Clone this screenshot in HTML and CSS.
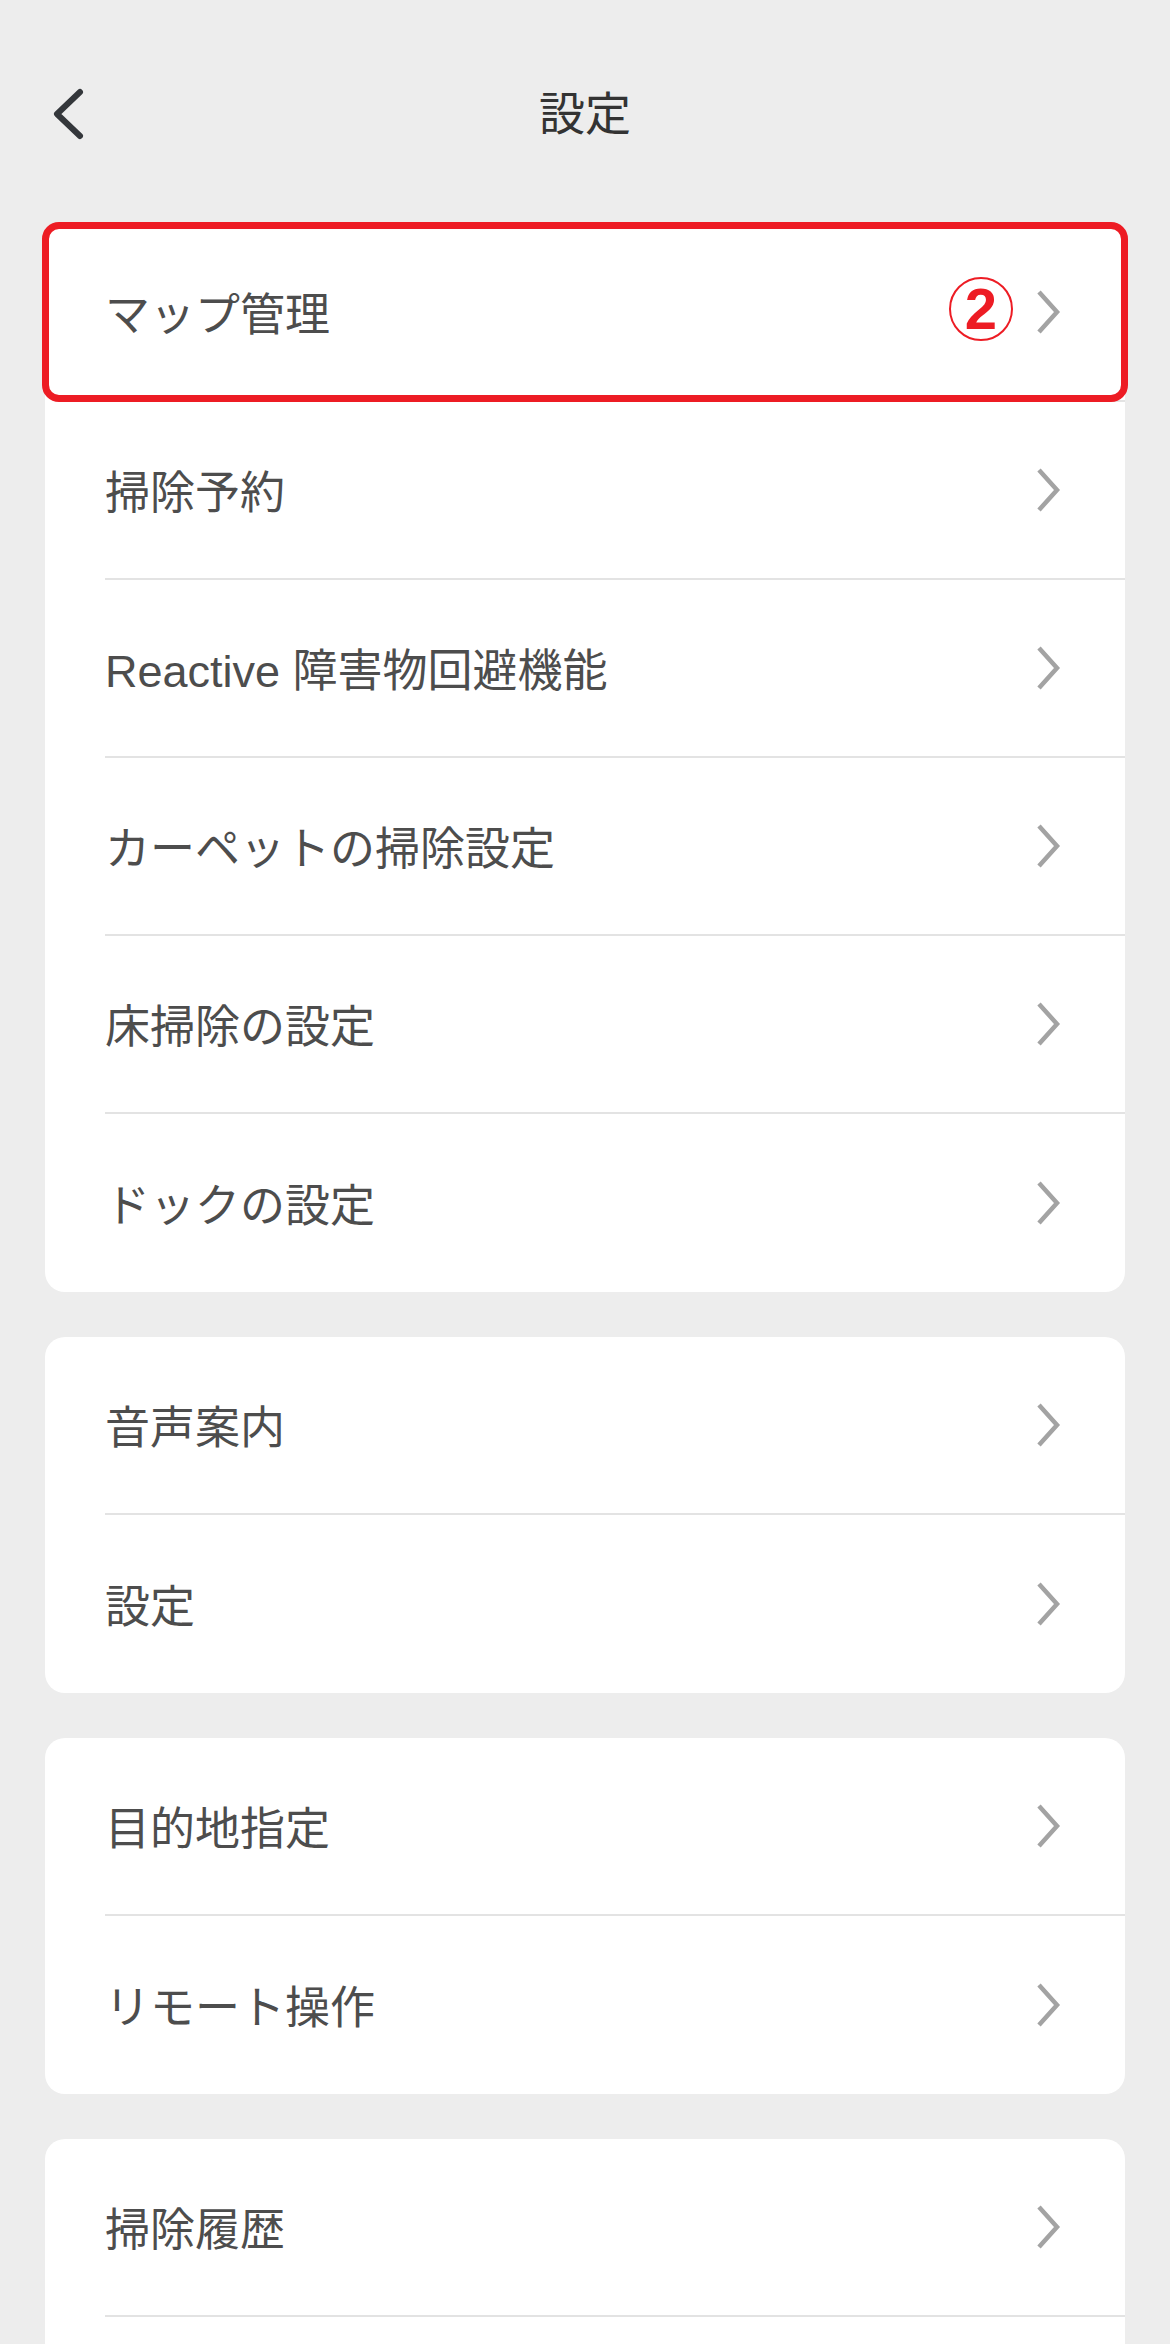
FILE: index.html
```html
<!DOCTYPE html>
<html lang="ja">
<head>
<meta charset="utf-8">
<title>設定</title>
<link rel="stylesheet" href="styles.css">
</head>
<body>
<header class="topbar">
  <button class="back" aria-label="戻る">
    <svg width="40" height="56" viewBox="0 0 40 56"><path d="M32 6 L9 28 L32 50" fill="none" stroke="#34373b" stroke-width="6" stroke-linecap="round" stroke-linejoin="round"/></svg>
  </button>
  <h1 class="title">設定</h1>
  <span class="spacer"></span>
</header>

<main class="list">
  <section class="card">
    <div class="row row-highlight">
      <span class="label">マップ管理</span>
      <span class="badge">2</span>
      <svg class="chev" width="26" height="46" viewBox="0 0 26 46"><path d="M3 3 L21 23 L3 43" fill="none" stroke="#a3a3a3" stroke-width="4.5"/></svg>
      <span class="highlight"></span>
    </div>
    <div class="row"><span class="label">掃除予約</span><svg class="chev" width="26" height="46" viewBox="0 0 26 46"><path d="M3 3 L21 23 L3 43" fill="none" stroke="#a3a3a3" stroke-width="4.5"/></svg></div>
    <div class="row"><span class="label">Reactive 障害物回避機能</span><svg class="chev" width="26" height="46" viewBox="0 0 26 46"><path d="M3 3 L21 23 L3 43" fill="none" stroke="#a3a3a3" stroke-width="4.5"/></svg></div>
    <div class="row"><span class="label">カーペットの掃除設定</span><svg class="chev" width="26" height="46" viewBox="0 0 26 46"><path d="M3 3 L21 23 L3 43" fill="none" stroke="#a3a3a3" stroke-width="4.5"/></svg></div>
    <div class="row"><span class="label">床掃除の設定</span><svg class="chev" width="26" height="46" viewBox="0 0 26 46"><path d="M3 3 L21 23 L3 43" fill="none" stroke="#a3a3a3" stroke-width="4.5"/></svg></div>
    <div class="row"><span class="label">ドックの設定</span><svg class="chev" width="26" height="46" viewBox="0 0 26 46"><path d="M3 3 L21 23 L3 43" fill="none" stroke="#a3a3a3" stroke-width="4.5"/></svg></div>
  </section>

  <section class="card">
    <div class="row"><span class="label">音声案内</span><svg class="chev" width="26" height="46" viewBox="0 0 26 46"><path d="M3 3 L21 23 L3 43" fill="none" stroke="#a3a3a3" stroke-width="4.5"/></svg></div>
    <div class="row"><span class="label">設定</span><svg class="chev" width="26" height="46" viewBox="0 0 26 46"><path d="M3 3 L21 23 L3 43" fill="none" stroke="#a3a3a3" stroke-width="4.5"/></svg></div>
  </section>

  <section class="card">
    <div class="row"><span class="label">目的地指定</span><svg class="chev" width="26" height="46" viewBox="0 0 26 46"><path d="M3 3 L21 23 L3 43" fill="none" stroke="#a3a3a3" stroke-width="4.5"/></svg></div>
    <div class="row"><span class="label">リモート操作</span><svg class="chev" width="26" height="46" viewBox="0 0 26 46"><path d="M3 3 L21 23 L3 43" fill="none" stroke="#a3a3a3" stroke-width="4.5"/></svg></div>
  </section>

  <section class="card">
    <div class="row"><span class="label">掃除履歴</span><svg class="chev" width="26" height="46" viewBox="0 0 26 46"><path d="M3 3 L21 23 L3 43" fill="none" stroke="#a3a3a3" stroke-width="4.5"/></svg></div>
    <div class="row row-empty"></div>
  </section>
</main>
</body>
</html>
```

FILE: styles.css
```css
* {
  box-sizing: border-box;
}

html, body {
  margin: 0;
  padding: 0;
}

body {
  background: #ededed;
  font-family: "Liberation Sans", "Noto Sans CJK JP", "Noto Sans", sans-serif;
  color: #4d4d4d;
  width: 1170px;
}

.topbar {
  display: grid;
  grid-template-columns: 1fr auto 1fr;
  align-items: center;
  height: 224px;
  padding-top: 4px;
}

.back {
  justify-self: start;
  margin-left: 48px;
  padding: 0;
  border: 0;
  background: none;
  width: 40px;
  height: 56px;
  display: flex;
}

.title {
  margin: 0;
  font-size: 46px;
  font-weight: 400;
  color: #333333;
  line-height: 1;
}

.list {
  display: flex;
  flex-direction: column;
  gap: 45px;
  margin: 0 45px;
}

.card {
  background: #ffffff;
  border-radius: 20px;
  padding-left: 60px;
}

.row {
  display: flex;
  align-items: center;
  height: 178px;
  padding-right: 63px;
  border-bottom: 2px solid #e3e3e3;
}

.row:last-child {
  border-bottom: 0;
}

.label {
  flex: 1;
  font-size: 45px;
  line-height: 1;
  color: #4d4d4d;
  padding-top: 6px;
}

.chev {
  flex: none;
  display: block;
}

.badge {
  flex: none;
  width: 64px;
  height: 64px;
  border: 2.5px solid #ed1c24;
  border-radius: 50%;
  display: flex;
  align-items: center;
  justify-content: center;
  margin-right: 23px;
  margin-top: -6px;
  color: #ed1c24;
  font-family: "Liberation Sans", Arial, sans-serif;
  font-weight: 700;
  font-size: 58px;
  line-height: 1;
}

.row-highlight {
  position: relative;
}

.highlight {
  position: absolute;
  top: -2px;
  left: -63px;
  right: -3px;
  bottom: -2px;
  border: 7px solid #ed1c24;
  border-radius: 17px;
  pointer-events: none;
}
```
